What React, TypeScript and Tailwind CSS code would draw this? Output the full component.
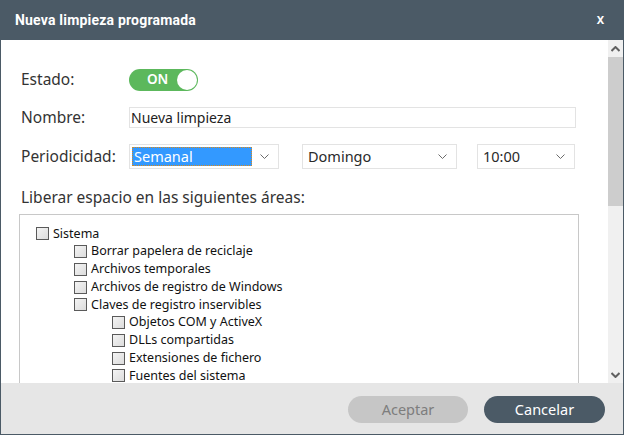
import React, { useState } from 'react';

type Area = { label: string; level: number };

const areas: Area[] = [
  { label: 'Sistema', level: 0 },
  { label: 'Borrar papelera de reciclaje', level: 1 },
  { label: 'Archivos temporales', level: 1 },
  { label: 'Archivos de registro de Windows', level: 1 },
  { label: 'Claves de registro inservibles', level: 1 },
  { label: 'Objetos COM y ActiveX', level: 2 },
  { label: 'DLLs compartidas', level: 2 },
  { label: 'Extensiones de fichero', level: 2 },
  { label: 'Fuentes del sistema', level: 2 },
];

const indent = ['pl-[16px]', 'pl-[54px]', 'pl-[92px]'];

const Chevron: React.FC = () => (
  <svg width="9" height="6" viewBox="0 0 9 6" className="shrink-0">
    <path d="M0.5 0.5 L4.5 4.5 L8.5 0.5" fill="none" stroke="#6b6b6b" strokeWidth="1" />
  </svg>
);

const Select: React.FC<{ value: string; width: string; focused?: boolean }> = ({ value, width, focused }) => (
  <div className={`${width} h-[25px] border border-[#e3e3e3] bg-white flex items-center pl-[2px] pr-[9px] shrink-0`}>
    {focused ? (
      <div className="flex-1 h-[19px] bg-[#3399ff] border border-dotted border-[#d9891a] flex items-center text-white text-[14.5px] leading-none pl-[1px]">
        {value}
      </div>
    ) : (
      <div className="flex-1 text-[14.5px] leading-none text-[#2a2a2a] pl-[3px]">{value}</div>
    )}
    <div className={focused ? 'ml-[8px]' : ''}>
      <Chevron />
    </div>
  </div>
);

const App: React.FC = () => {
  const [on, setOn] = useState(true);

  return (
    <div className="w-[624px] h-[435px] border border-[#4b5a66] flex flex-col overflow-hidden bg-white font-['Noto_Sans',sans-serif]">
      {/* barra de título */}
      <div className="h-[39px] bg-[#4b5a66] flex items-center justify-between pl-[14px] pr-[19px] shrink-0">
        <span className="text-white text-[14px] tracking-[0.2px] font-bold font-['Roboto',sans-serif]">Nueva limpieza programada</span>
        <span className="text-white text-[11px] font-bold">X</span>
      </div>

      <div className="flex h-[343px] shrink-0">
        <div className="flex-1 overflow-hidden pl-[20px] pr-[32px] pt-[29px]">
          <div className="flex items-center h-[22px]">
            <span className="w-[108px] text-[15.5px] leading-none text-[#333]">Estado:</span>
            <button
              onClick={() => setOn(!on)}
              className="w-[69px] h-[22px] rounded-full bg-[#5cb85c] flex items-center justify-between pl-[18px] pr-[1px]"
            >
              <span className="text-white text-[13.5px] font-semibold leading-none">{on ? 'ON' : 'OFF'}</span>
              <span className="w-[20px] h-[20px] rounded-full bg-white" />
            </button>
          </div>

          <div className="flex items-center h-[21px] mt-[16px]">
            <span className="w-[108px] text-[15.5px] leading-none text-[#333]">Nombre:</span>
            <div className="flex-1 h-[21px] border border-[#e3e3e3] flex items-center pl-[1px] text-[14px] leading-none text-[#222]">
              Nueva limpieza
            </div>
          </div>

          <div className="flex items-center h-[25px] mt-[16px]">
            <span className="w-[108px] text-[15.5px] leading-none text-[#333]">Periodicidad:</span>
            <Select value="Semanal" width="w-[150px]" focused />
            <div className="w-[23px]" />
            <Select value="Domingo" width="w-[155px]" />
            <div className="w-[20px]" />
            <Select value="10:00" width="w-[98px]" />
          </div>

          <div className="mt-[17px] h-[22px] text-[15.5px] text-[#333] leading-[22px]">
            Liberar espacio en las siguientes áreas:
          </div>

          <div className="mt-[6px] -ml-[2px] -mr-[3px] border border-[#c8c8c8] pt-[10px] h-[200px]">
            {areas.map((a) => (
              <div key={a.label} className={`flex items-center h-[17.75px] ${indent[a.level]}`}>
                <span className="w-[13px] h-[13px] border border-[#5a5a5a] bg-gradient-to-br from-[#f4f4f4] to-[#dcdcdc] shrink-0" />
                <span className="ml-[4px] text-[12.5px] text-[#111] leading-none">{a.label}</span>
              </div>
            ))}
          </div>
        </div>

        {/* scrollbar */}
        <div className="w-[15px] bg-[#f0f0f0] flex flex-col shrink-0">
          <div className="h-[17px] flex items-center justify-center">
            <svg width="9" height="6" viewBox="0 0 9 6">
              <path d="M0.5 5 L4.5 1 L8.5 5" fill="none" stroke="#606060" strokeWidth="2" />
            </svg>
          </div>
          <div className="h-[149px] bg-[#cdcdcd]" />
          <div className="flex-1" />
          <div className="h-[17px] flex items-center justify-center">
            <svg width="9" height="6" viewBox="0 0 9 6">
              <path d="M0.5 1 L4.5 5 L8.5 1" fill="none" stroke="#606060" strokeWidth="2" />
            </svg>
          </div>
        </div>
      </div>

      {/* pie */}
      <div className="flex-1 bg-[#e6e6e6] flex items-start justify-end gap-[16px] pt-[13px] pr-[18px]">
        <button className="w-[120px] h-[27px] rounded-full bg-[#c6c6c6] text-[#7d7d7d] text-[14.5px] leading-none">
          Aceptar
        </button>
        <button className="w-[121px] h-[27px] rounded-full bg-[#4b5a66] text-white text-[14.5px] leading-none">
          Cancelar
        </button>
      </div>
    </div>
  );
};

export default App;
